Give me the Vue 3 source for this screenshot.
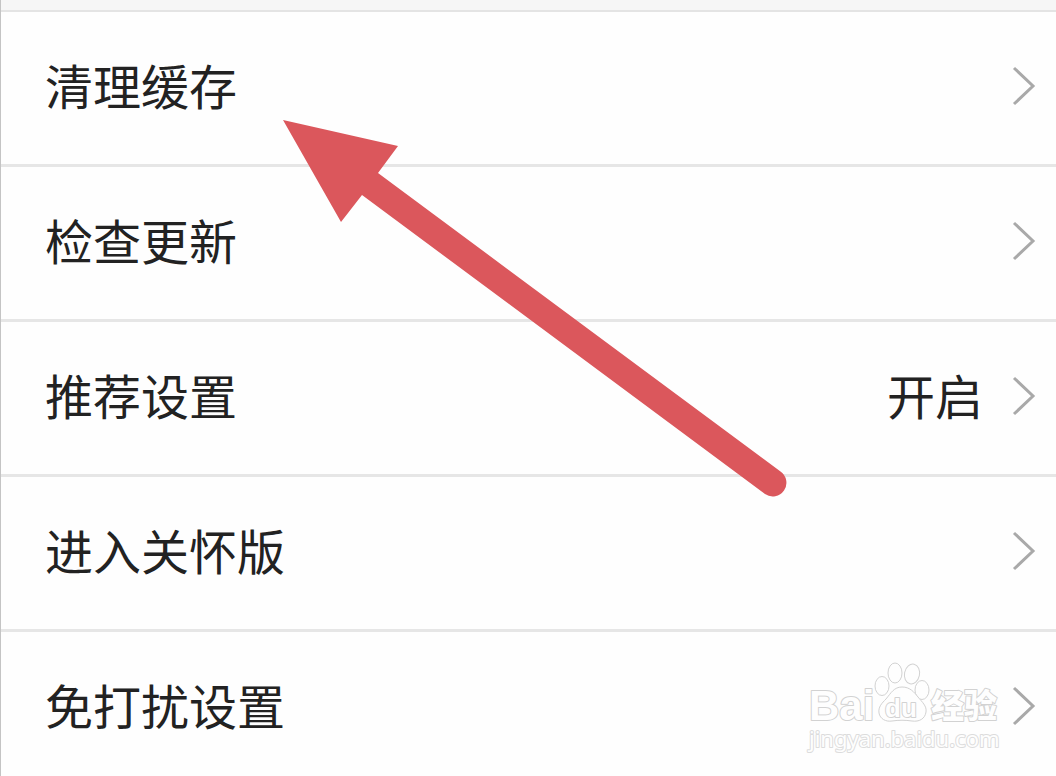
<script setup>
const rows = [
  { label: '清理缓存' },
  { label: '检查更新' },
  { label: '推荐设置', value: '开启' },
  { label: '进入关怀版' },
  { label: '免打扰设置' },
]
</script>

<template>
  <main class="screen">
    <div class="gap"></div>
    <nav class="list" aria-label="设置">
      <button v-for="row in rows" :key="row.label" class="row" type="button">
        <span class="label">{{ row.label }}</span>
        <span v-if="row.value" class="value">{{ row.value }}</span>
        <svg class="chevron" viewBox="0 0 24 40" aria-hidden="true">
          <path d="M2 2 L21 20 L2 38" />
        </svg>
      </button>
    </nav>

    <svg class="arrow" viewBox="0 0 504 378" aria-hidden="true">
      <path d="M0 0 L115 26 L95 53 L497.500 351.500 A13.500 13.500 0 0 1 482 374 L79 75 L58 102 Z" />
    </svg>

    <svg class="watermark" viewBox="0 0 200 100" role="img" aria-label="Baidu 经验">
      <text class="brand" x="9" y="64">Bai</text>
      <text class="brand-cn" x="131" y="62">经验</text>
      <g class="paw">
        <ellipse cx="82" cy="30" rx="7" ry="9.500" />
        <ellipse cx="95" cy="17" rx="7" ry="10" />
        <ellipse cx="112" cy="18" rx="7.500" ry="10" transform="rotate(12 112 18)" />
        <ellipse cx="122" cy="34" rx="7" ry="9.500" />
        <path d="M102 31 C94 31 91 37 86 43 C82 47 78 51 79 57 C80 63 86 66 92 65 C99 64 105 64 112 65 C119 66 125 63 126 56 C127 50 122 46 118 41 C114 36 110 31 102 31 Z" />
      </g>
      <text class="du" x="85" y="61">du</text>
      <text class="site" x="9" y="91">jingyan.baidu.com</text>
    </svg>
  </main>
</template>

<style>
body {
  margin: 0;
  background: #fefefe;
}
</style>

<style scoped>
.screen {
  position: relative;
  box-sizing: border-box;
  height: 100vh;
  overflow: hidden;
  border-left: 1px solid #c4c4c4;
  background: #fefefe;
  font-family: "Noto Sans CJK SC", sans-serif;
}
.gap {
  height: 10px;
  background: #f6f6f6;
  border-bottom: 2px solid #e4e4e4;
}
.list {
  display: flex;
  flex-direction: column;
}
.row {
  display: flex;
  align-items: center;
  box-sizing: border-box;
  width: 100%;
  height: 155px;
  padding: 0 20px 4px 44px;
  border: 0;
  border-bottom: 3px solid #e6e6e6;
  background: transparent;
  color: #222;
  font: inherit;
  font-size: 48px;
  line-height: 72px;
  text-align: left;
}
.label,
.value {
  padding-bottom: 4px;
}
.label {
  flex: 1;
}
.value {
  margin-right: 29px;
}
.chevron {
  width: 24px;
  height: 40px;
  fill: none;
  stroke: #a9a9a9;
  stroke-width: 3;
}
.arrow {
  position: absolute;
  left: 282px;
  top: 120px;
  width: 504px;
  height: 378px;
  fill: #db575c;
  pointer-events: none;
}
.watermark {
  position: absolute;
  right: 56px;
  bottom: 20px;
  width: 200px;
  height: 100px;
  overflow: visible;
  pointer-events: none;
}
.watermark text {
  fill: #fefefe;
  stroke: #d2d2d2;
  stroke-width: 2;
  stroke-linejoin: round;
  paint-order: stroke;
}
.brand {
  font: bold 42px "Liberation Sans", sans-serif;
}
.watermark .brand-cn {
  font: 900 33px "Noto Sans CJK SC", sans-serif;
}
.paw {
  fill: #fefefe;
  stroke: #d2d2d2;
  stroke-width: 1;
}
.watermark .du {
  font: bold 26px "Liberation Sans", sans-serif;
}
.watermark .site {
  font: 22px "Noto Sans", sans-serif;
  stroke: #dcdcdc;
}
</style>
